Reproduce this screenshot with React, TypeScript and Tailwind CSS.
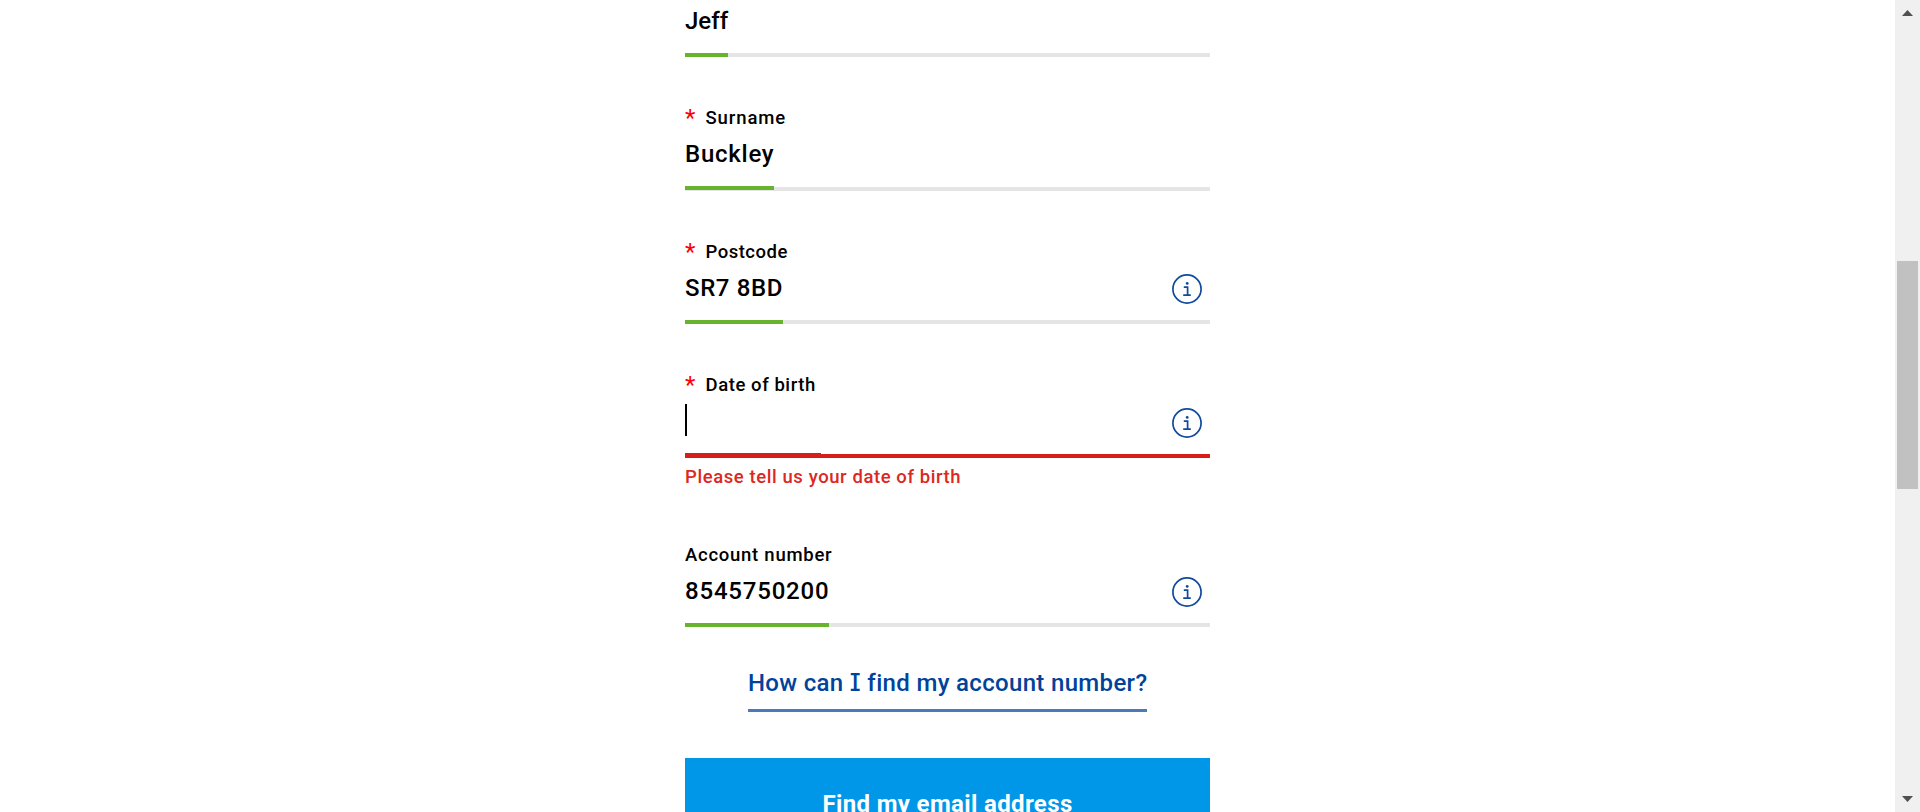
import type { ReactNode } from "react";

function InfoIcon() {
  return (
    <svg viewBox="0 0 30 30" className="mt-px mr-2 h-[30px] w-[30px] shrink-0" fill="none" stroke="#104a9c">
      <circle cx="15" cy="15" r="14.1" strokeWidth="1.7" />
      <path d="M11.8 13.2h3.8v8M11.2 21.2h7.6" strokeWidth="1.7" />
      <circle cx="15.2" cy="9.4" r="1.4" fill="#104a9c" stroke="none" />
    </svg>
  );
}

function Label({ children, required = true, className }: { children: ReactNode; required?: boolean; className: string }) {
  return (
    <div className="flex h-6 items-center whitespace-nowrap text-[18.5px] leading-6 font-medium">
      {required && <span className="w-[20.5px] text-[24px] font-normal text-[#ff0000]">*</span>}
      <span className={className}>{children}</span>
    </div>
  );
}

function Value({ children, info = false, className = "" }: { children?: ReactNode; info?: boolean; className?: string }) {
  return (
    <div className="mt-2 flex h-8 items-center justify-between whitespace-nowrap text-[24px] leading-8 font-medium">
      <span className={className}>{children}</span>
      {info && <InfoIcon />}
    </div>
  );
}

export default function App() {
  return (
    <div className="flex h-[812px] overflow-hidden bg-white font-['Roboto','Liberation_Sans',sans-serif] text-black">
      <main className="flex flex-1 justify-center overflow-hidden">
        <form className="flex w-[525px] shrink-0 flex-col">
          <section className="-mt-[3px]">
            <Value className="tracking-[0px]">Jeff</Value>
            <div className="mt-4 h-1 bg-[#e5e5e5]"><div className="h-1 w-[43px] bg-[#66b32e]" /></div>
          </section>
          <section className="mt-[49px]">
            <Label className="tracking-[0.9px]">Surname</Label>
            <Value className="tracking-[0.75px]">Buckley</Value>
            <div className="mt-4 h-[5px] border-t border-white bg-[#e5e5e5]"><div className="-mt-px h-1 w-[89px] bg-[#66b32e]" /></div>
          </section>
          <section className="mt-[49px]">
            <Label className="tracking-[0.5px]">Postcode</Label>
            <Value info className="tracking-[0.6px]">SR7 8BD</Value>
            <div className="mt-4 h-1 bg-[#e5e5e5]"><div className="h-1 w-[98px] bg-[#66b32e]" /></div>
          </section>
          <section className="mt-[49px]">
            <Label className="tracking-[0.57px]">Date of birth</Label>
            <div className="mt-[7px] flex h-[33px] items-start justify-between">
              <span className="h-8 w-0.5 bg-black" />
              <div className="pt-[3px]"><InfoIcon /></div>
            </div>
            <div className="mt-4 flex h-[5px] items-end"><div className="h-[5px] w-[136px] bg-[#d81e17]" /><div className="h-1 flex-1 bg-[#d81e17]" /></div>
            <p className="mt-[7px] whitespace-nowrap text-[18.5px] leading-6 font-medium text-[#dc2822]"><span className="tracking-[0.58px]">Please tell us your date of birth</span></p>
          </section>
          <section className="mt-[54px]">
            <Label required={false} className="tracking-[0.74px]">Account number</Label>
            <Value info className="tracking-[0.8px]">8545750200</Value>
            <div className="mt-4 h-1 bg-[#e5e5e5]"><div className="h-1 w-36 bg-[#66b32e]" /></div>
          </section>
          <a className="mt-10 h-[45px] w-[399px] shrink-0 self-center whitespace-nowrap border-b-[3px] border-[#4c7ab8] text-[24px] leading-8 font-medium text-[#00439a]">
            <span className="tracking-[0.33px]">How can <span className="font-['Inter'] [font-feature-settings:'cv08','ss02']">I</span> find my account number?</span>
          </a>
          <button type="button" className="mt-[46px] flex h-[92px] shrink-0 items-center justify-center whitespace-nowrap bg-[#0097e8] text-[24px] leading-8 font-bold text-white">
            <span className="tracking-[0.36px]">Find my email address</span>
          </button>
        </form>
      </main>
      <aside className="flex w-[25px] shrink-0 flex-col items-center bg-[#f0f0f0] pt-2.5">
        <svg className="h-1.5 w-[11px] shrink-0" viewBox="0 0 11 6"><path d="M0 6 5.5 0 11 6Z" fill="#505050" /></svg>
        <div className="mt-[245px] h-[228px] w-[21px] shrink-0 bg-[#c1c1c1]" />
        <svg className="mt-[307px] h-1.5 w-[11px] shrink-0" viewBox="0 0 11 6"><path d="M0 0 5.5 6 11 0Z" fill="#505050" /></svg>
      </aside>
    </div>
  );
}
